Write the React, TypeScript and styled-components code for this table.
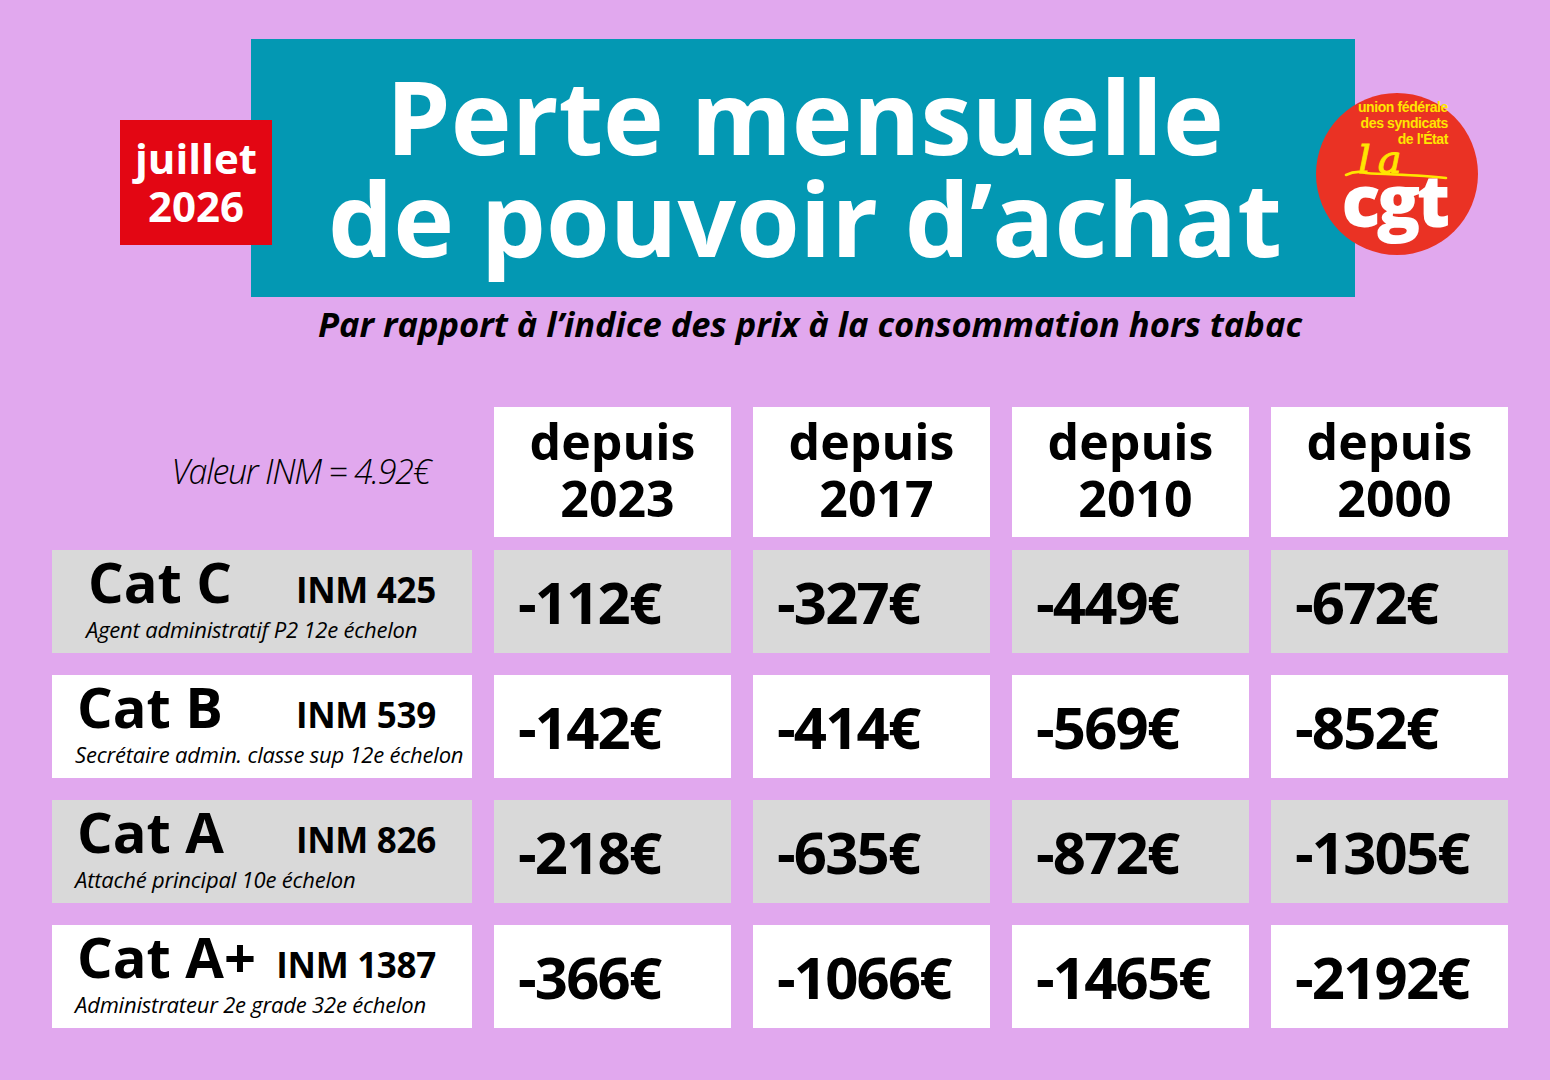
import React from "react";
import styled, { createGlobalStyle, css } from "styled-components";

const LILAC = "#e1a8ee";
const TEAL = "#0398b3";
const RED = "#e30613";
const GREY = "#d9d9d9";

const Global = createGlobalStyle`
  html, body {
    margin: 0;
    padding: 0;
    width: 1550px;
    height: 1080px;
    overflow: hidden;
    background: ${LILAC};
  }
  * { box-sizing: border-box; }
`;

const Page = styled.div`
  width: 1550px;
  height: 1080px;
  padding-top: 39px;
  font-family: "Open Sans", "DejaVu Sans", sans-serif;
  color: #000;
`;

const Masthead = styled.header`
  position: relative;
  height: 258px;
`;

const TitleBox = styled.div`
  margin-left: 251px;
  width: 1104px;
  height: 258px;
  background: ${TEAL};
  display: flex;
  align-items: center;
  justify-content: center;
  padding-bottom: 4px;
`;

const Title = styled.h1`
  margin: 0;
  font-weight: 700;
  font-size: 103px;
  line-height: 102px;
  color: #fff;
  text-align: center;
  padding-left: 4px;
`;

const DateBadge = styled.div`
  position: absolute;
  left: 120px;
  top: 81px;
  width: 152px;
  height: 125px;
  background: ${RED};
  color: #fff;
  display: flex;
  flex-direction: column;
  align-items: center;
  justify-content: center;
  font-weight: 700;
  font-size: 42px;
  line-height: 48px;
  padding-bottom: 2px;
`;

const LogoWrap = styled.div`
  position: absolute;
  left: 1316px;
  top: 54px;
  width: 162px;
  height: 162px;
`;

const Subtitle = styled.p`
  margin: 7px 0 0 251px;
  width: 1104px;
  padding-left: 14px;
  text-align: center;
  font-weight: 700;
  font-style: italic;
  font-size: 34.5px;
  line-height: 40px;
  white-space: nowrap;
`;

const columns = css`
  display: grid;
  grid-template-columns: 420px repeat(4, 237px);
  column-gap: 22px;
  margin-left: 52px;
`;

const HeaderGrid = styled.div`
  ${columns};
  margin-top: 63px;
  height: 130px;
  margin-bottom: 13px;
`;

const BodyGrid = styled.div`
  ${columns};
  grid-auto-rows: 103px;
  row-gap: 22px;
`;

const InmValue = styled.div`
  display: flex;
  align-items: center;
  justify-content: flex-end;
  padding: 0 42px 2px 0;
  font-style: italic;
  font-weight: 300;
  font-size: 34px;
  letter-spacing: -1.3px;
  white-space: nowrap;
`;

const YearHead = styled.div`
  background: #fff;
  display: flex;
  flex-direction: column;
  align-items: center;
  justify-content: center;
  font-weight: 700;
  font-size: 50px;
  line-height: 57px;
  padding-bottom: 5px;
`;

const Year = styled.span`
  padding-left: 10px;
`;

const LabelCell = styled.div<{ $alt: boolean; $indent: number }>`
  background: ${(p) => (p.$alt ? GREY : "#fff")};
  display: flex;
  flex-direction: column;
  padding: 2px 36px 0 ${(p) => p.$indent}px;
`;

const LabelTop = styled.div`
  display: flex;
  justify-content: space-between;
  align-items: baseline;
  height: 58px;
`;

const CatName = styled.span`
  font-weight: 700;
  font-size: 56px;
  line-height: 58px;
`;

const Inm = styled.span`
  font-weight: 700;
  font-size: 35px;
  line-height: 58px;
  letter-spacing: -0.3px;
`;

const Grade = styled.span`
  margin-top: 6px;
  margin-left: -2px;
  font-style: italic;
  font-size: 22px;
  line-height: 26px;
  letter-spacing: -0.2px;
  white-space: nowrap;
`;

const ValueCell = styled.div<{ $alt: boolean }>`
  background: ${(p) => (p.$alt ? GREY : "#fff")};
  display: flex;
  align-items: center;
  padding-left: 24px;
  font-weight: 700;
  font-size: 58px;
  line-height: 58px;
  letter-spacing: -1.8px;
`;

const CgtLogo = () => (
  <svg width="162" height="162" viewBox="0 0 162 162">
    <circle cx="81" cy="81" r="81" fill="#ea3224" />
    <g
      fill="#ffe500"
      fontFamily="'Liberation Sans', Arial, sans-serif"
      fontWeight="700"
      fontSize="14"
      textAnchor="end"
      letterSpacing="-0.4"
    >
      <text x="132" y="19">union fédérale</text>
      <text x="132" y="35">des syndicats</text>
      <text x="132" y="51">de l'État</text>
    </g>
    <text
      x="42"
      y="80"
      fill="#ffe500"
      stroke="#ffe500"
      strokeWidth="0.9"
      fontFamily="'DejaVu Serif', 'Liberation Serif', serif"
      fontStyle="italic"
      fontWeight="400"
      fontSize="40"
      letterSpacing="7"
    >
      la
    </text>
    <path
      d="M30 82 Q 40 77 50 80 C 72 82, 100 81, 130 85"
      stroke="#ffe500"
      strokeWidth="2.6"
      fill="none"
      strokeLinecap="round"
    />
    <text
      x="78"
      y="134"
      fill="#fff"
      fontFamily="'Open Sans', sans-serif"
      fontWeight="800"
      fontSize="72"
      textAnchor="middle"
      letterSpacing="-3.5"
    >
      cgt
    </text>
  </svg>
);

type Row = {
  cat: string;
  inm: string;
  grade: string;
  indent: number;
  values: string[];
};

const rows: Row[] = [
  {
    cat: "Cat C",
    inm: "INM 425",
    grade: "Agent administratif P2 12e échelon",
    indent: 36,
    values: ["-112€", "-327€", "-449€", "-672€"],
  },
  {
    cat: "Cat B",
    inm: "INM 539",
    grade: "Secrétaire admin. classe sup 12e échelon",
    indent: 25,
    values: ["-142€", "-414€", "-569€", "-852€"],
  },
  {
    cat: "Cat A",
    inm: "INM 826",
    grade: "Attaché principal 10e échelon",
    indent: 25,
    values: ["-218€", "-635€", "-872€", "-1305€"],
  },
  {
    cat: "Cat A+",
    inm: "INM 1387",
    grade: "Administrateur 2e grade 32e échelon",
    indent: 25,
    values: ["-366€", "-1066€", "-1465€", "-2192€"],
  },
];

const years = ["2023", "2017", "2010", "2000"];

export default function App() {
  return (
    <>
      <Global />
      <Page>
        <Masthead>
          <TitleBox>
            <Title>
              Perte mensuelle
              <br />
              de pouvoir d’achat
            </Title>
          </TitleBox>
          <DateBadge>
            <span>juillet</span>
            <span>2026</span>
          </DateBadge>
          <LogoWrap>
            <CgtLogo />
          </LogoWrap>
        </Masthead>
        <Subtitle>Par rapport à l’indice des prix à la consommation hors tabac</Subtitle>

        <HeaderGrid>
          <InmValue>Valeur INM = 4.92€</InmValue>
          {years.map((y) => (
            <YearHead key={y}>
              <span>depuis</span>
              <Year>{y}</Year>
            </YearHead>
          ))}
        </HeaderGrid>

        <BodyGrid>
          {rows.map((r, i) => {
            const alt = i % 2 === 0;
            return (
              <React.Fragment key={r.cat}>
                <LabelCell $alt={alt} $indent={r.indent}>
                  <LabelTop>
                    <CatName>{r.cat}</CatName>
                    <Inm>{r.inm}</Inm>
                  </LabelTop>
                  <Grade>{r.grade}</Grade>
                </LabelCell>
                {r.values.map((v, j) => (
                  <ValueCell key={j} $alt={alt}>
                    {v}
                  </ValueCell>
                ))}
              </React.Fragment>
            );
          })}
        </BodyGrid>
      </Page>
    </>
  );
}
